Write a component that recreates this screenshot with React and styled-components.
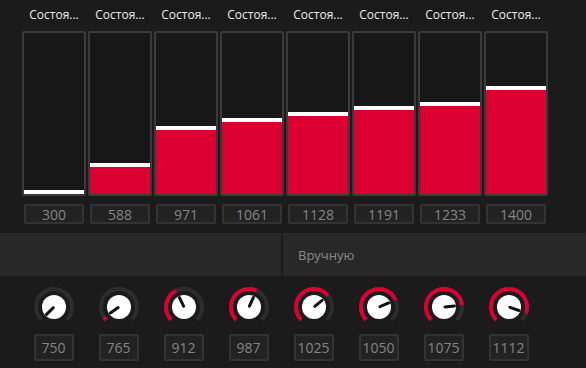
import React from 'react';
import styled, { createGlobalStyle } from 'styled-components';

const GlobalStyle = createGlobalStyle`
  body {
    margin: 0;
    background: #1b1b1b;
    font-family: "Open Sans", "Noto Sans", sans-serif;
  }
`;

const Page = styled.div`
  width: 586px;
  height: 368px;
  overflow: hidden;
  background: #1b1b1b;
`;

const BarsSection = styled.div`
  display: flex;
  gap: 2px;
  height: 233px;
  padding-left: 22px;
`;

const BarColumn = styled.div`
  width: 64px;
  display: flex;
  flex-direction: column;
  align-items: center;
`;

const BarLabel = styled.div`
  height: 31px;
  line-height: 30px;
  font-size: 12px;
  color: #ececec;
  white-space: nowrap;
`;

const BarBox = styled.div`
  box-sizing: border-box;
  width: 64px;
  height: 165px;
  border: 2px solid #3b3b3b;
  border-radius: 2px;
  background: #181818;
  display: flex;
  flex-direction: column;
  justify-content: flex-end;
`;

const BarFill = styled.div`
  box-sizing: border-box;
  width: 100%;
  background: #dc0032;
  border-top: 4px solid #ffffff;
`;

const ValueBox = styled.div`
  box-sizing: border-box;
  width: ${(p) => p.$w}px;
  height: ${(p) => p.$h}px;
  margin-top: ${(p) => p.$mt}px;
  border: 2px solid #333333;
  border-radius: 2px;
  background: #222222;
  color: #858585;
  font-size: 14px;
  display: flex;
  align-items: center;
  justify-content: center;
`;

const ModeBar = styled.div`
  display: grid;
  grid-template-columns: 281px 1fr;
  gap: 2px;
  height: 43px;
  background: #1c1c1c;
`;

const ModeTab = styled.div`
  background: #282828;
  color: #8a8a8a;
  font-size: 13px;
  display: flex;
  align-items: center;
  padding-left: 15px;
`;

const KnobRow = styled.div`
  display: flex;
  padding: 9px 0 0 21px;
`;

const KnobCell = styled.div`
  width: 65px;
  display: flex;
  flex-direction: column;
  align-items: center;
`;

const bars = [300, 588, 971, 1061, 1128, 1191, 1233, 1400];
const knobs = [750, 765, 912, 987, 1025, 1050, 1075, 1112];

const point = (deg, r) => {
  const a = (deg * Math.PI) / 180;
  return [22 + r * Math.sin(a), 22 - r * Math.cos(a)];
};

const arc = (from, to, r) => {
  const [x1, y1] = point(from, r);
  const [x2, y2] = point(to, r);
  const large = to - from > 180 ? 1 : 0;
  return `M ${x1} ${y1} A ${r} ${r} 0 ${large} 1 ${x2} ${y2}`;
};

const Knob = ({ value }) => {
  const f = Math.max(0, Math.min(1, (value - 750) / 400));
  const angle = -135 + f * 270;
  const [px1, py1] = point(angle, 1);
  const [px2, py2] = point(angle, 10.5);
  return (
    <svg width="44" height="44" viewBox="0 0 44 44">
      <path d={arc(-135, 135, 18)} fill="none" stroke="#2d2d2d" strokeWidth="4" />
      {f > 0 && <path d={arc(-135, angle, 18)} fill="none" stroke="#dc0032" strokeWidth="4" />}
      <circle cx="22" cy="22" r="12" fill="#ffffff" />
      <line x1={px1} y1={py1} x2={px2} y2={py2} stroke="#111" strokeWidth="3" strokeLinecap="round" />
    </svg>
  );
};

const App = () => (
  <Page>
    <GlobalStyle />
    <BarsSection>
      {bars.map((v, i) => (
        <BarColumn key={i}>
          <BarLabel>Состоя...</BarLabel>
          <BarBox>
            <BarFill style={{ height: `${(v - 300) * 0.0948 + 4}px` }} />
          </BarBox>
          <ValueBox $w={60} $h={20} $mt={8}>{v}</ValueBox>
        </BarColumn>
      ))}
    </BarsSection>
    <ModeBar>
      <ModeTab />
      <ModeTab>Вручную</ModeTab>
    </ModeBar>
    <KnobRow>
      {knobs.map((v, i) => (
        <KnobCell key={i}>
          <Knob value={v} />
          <ValueBox $w={40} $h={27} $mt={5}>{v}</ValueBox>
        </KnobCell>
      ))}
    </KnobRow>
  </Page>
);

export default App;
